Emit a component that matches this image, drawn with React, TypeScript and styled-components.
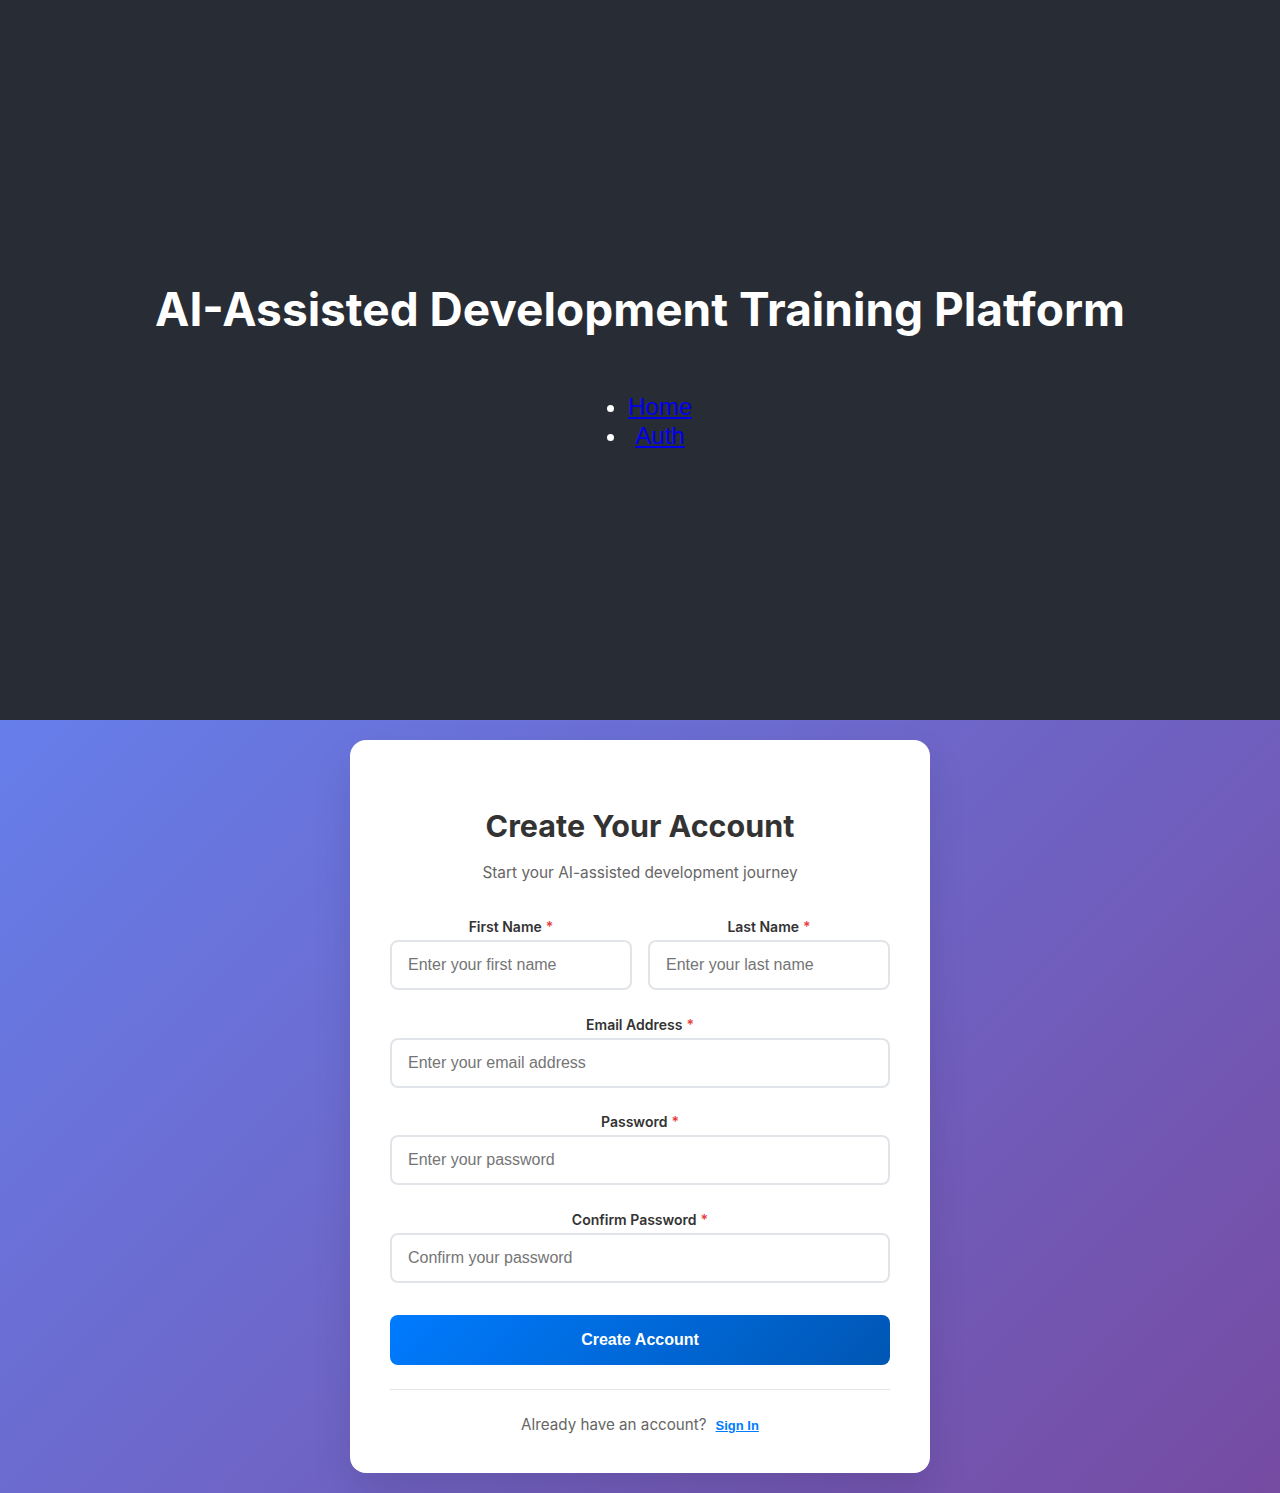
import React from "react";
import styled, { createGlobalStyle } from "styled-components";

const GlobalStyle = createGlobalStyle`
  * {
    box-sizing: border-box;
  }
  body {
    margin: 0;
    font-family: Inter, "Noto Sans", sans-serif;
  }
`;

const Header = styled.header`
  background: #282c34;
  height: 720px;
  display: flex;
  flex-direction: column;
  align-items: center;
  justify-content: center;
  color: #fff;
  text-align: center;
`;

const Title = styled.h1`
  margin: 34px 0 30px;
  font-size: 46px;
  line-height: 58px;
  font-weight: 700;
`;

const NavList = styled.ul`
  margin: 24px 0;
  padding-left: 40px;
  font-family: "Liberation Sans", Arial, sans-serif;
  font-size: 24px;
  line-height: 29px;
`;

const NavLink = styled.a`
  color: #0000ee;
  text-decoration: underline;
`;

const AuthSection = styled.main`
  min-height: 773px;
  padding: 20px;
  display: flex;
  justify-content: center;
  background: linear-gradient(135deg, #667eea 0%, #764ba2 100%);
`;

const Card = styled.div`
  width: 580px;
  background: #fff;
  border-radius: 16px;
  padding: 40px 40px 28px;
  box-shadow: 0 20px 40px rgba(0, 0, 0, 0.1);
`;

const CardTitle = styled.h2`
  margin: 28px 0 0;
  text-align: center;
  font-size: 30.5px;
  line-height: 36px;
  font-weight: 700;
  color: #333;
`;

const Subtitle = styled.p`
  margin: 19px 0 35px;
  text-align: center;
  font-size: 15.4px;
  line-height: 20px;
  color: #666;
`;

const Row = styled.div`
  display: grid;
  grid-template-columns: 1fr 1fr;
  gap: 16px;
`;

const Field = styled.div`
  display: flex;
  flex-direction: column;
  margin-bottom: 25.5px;
`;

const Label = styled.label`
  text-align: center;
  font-size: 14px;
  line-height: 17px;
  font-weight: 600;
  color: #333;
  margin-bottom: 5px;
`;

const Required = styled.span`
  color: #e53e3e;
  margin-left: 4px;
`;

const Input = styled.input`
  width: 100%;
  height: 50px;
  padding: 12px 16px;
  border: 2px solid #e1e5e9;
  border-radius: 8px;
  font-family: "Liberation Sans", Arial, sans-serif;
  font-size: 16px;
  background: #fff;
  outline: none;

  &::placeholder {
    color: #757575;
  }
`;

const SubmitButton = styled.button`
  width: 100%;
  height: 50px;
  margin-top: 7px;
  border: none;
  border-radius: 8px;
  background: linear-gradient(135deg, #007bff 0%, #0056b3 100%);
  color: #fff;
  font-family: "Liberation Sans", Arial, sans-serif;
  font-size: 16px;
  font-weight: 700;
  cursor: pointer;
`;

const Footer = styled.div`
  margin-top: 24px;
  padding-top: 24px;
  border-top: 1px solid #e1e5e9;
  text-align: center;
  font-size: 15.2px;
  line-height: 22px;
  color: #666;
`;

const LinkButton = styled.button`
  background: none;
  border: none;
  padding: 0;
  margin-left: 9px;
  color: #007bff;
  font-family: "Liberation Sans", Arial, sans-serif;
  font-size: 13px;
  font-weight: 700;
  text-decoration: underline;
  cursor: pointer;
`;

type FieldProps = { label: string; placeholder: string; type?: string };

function FormField({ label, placeholder, type = "text" }: FieldProps) {
  return (
    <Field>
      <Label>
        {label}
        <Required>*</Required>
      </Label>
      <Input type={type} placeholder={placeholder} />
    </Field>
  );
}

export default function App() {
  return (
    <>
      <GlobalStyle />
      <Header>
        <Title>AI-Assisted Development Training Platform</Title>
        <nav>
          <NavList>
            <li>
              <NavLink href="#home">Home</NavLink>
            </li>
            <li>
              <NavLink href="#auth">Auth</NavLink>
            </li>
          </NavList>
        </nav>
      </Header>
      <AuthSection>
        <Card>
          <CardTitle>Create Your Account</CardTitle>
          <Subtitle>Start your AI-assisted development journey</Subtitle>
          <form onSubmit={e => e.preventDefault()}>
            <Row>
              <FormField label="First Name" placeholder="Enter your first name" />
              <FormField label="Last Name" placeholder="Enter your last name" />
            </Row>
            <FormField
              label="Email Address"
              type="email"
              placeholder="Enter your email address"
            />
            <FormField
              label="Password"
              type="password"
              placeholder="Enter your password"
            />
            <FormField
              label="Confirm Password"
              type="password"
              placeholder="Confirm your password"
            />
            <SubmitButton type="submit">Create Account</SubmitButton>
          </form>
          <Footer>
            Already have an account?
            <LinkButton type="button">Sign In</LinkButton>
          </Footer>
        </Card>
      </AuthSection>
    </>
  );
}
